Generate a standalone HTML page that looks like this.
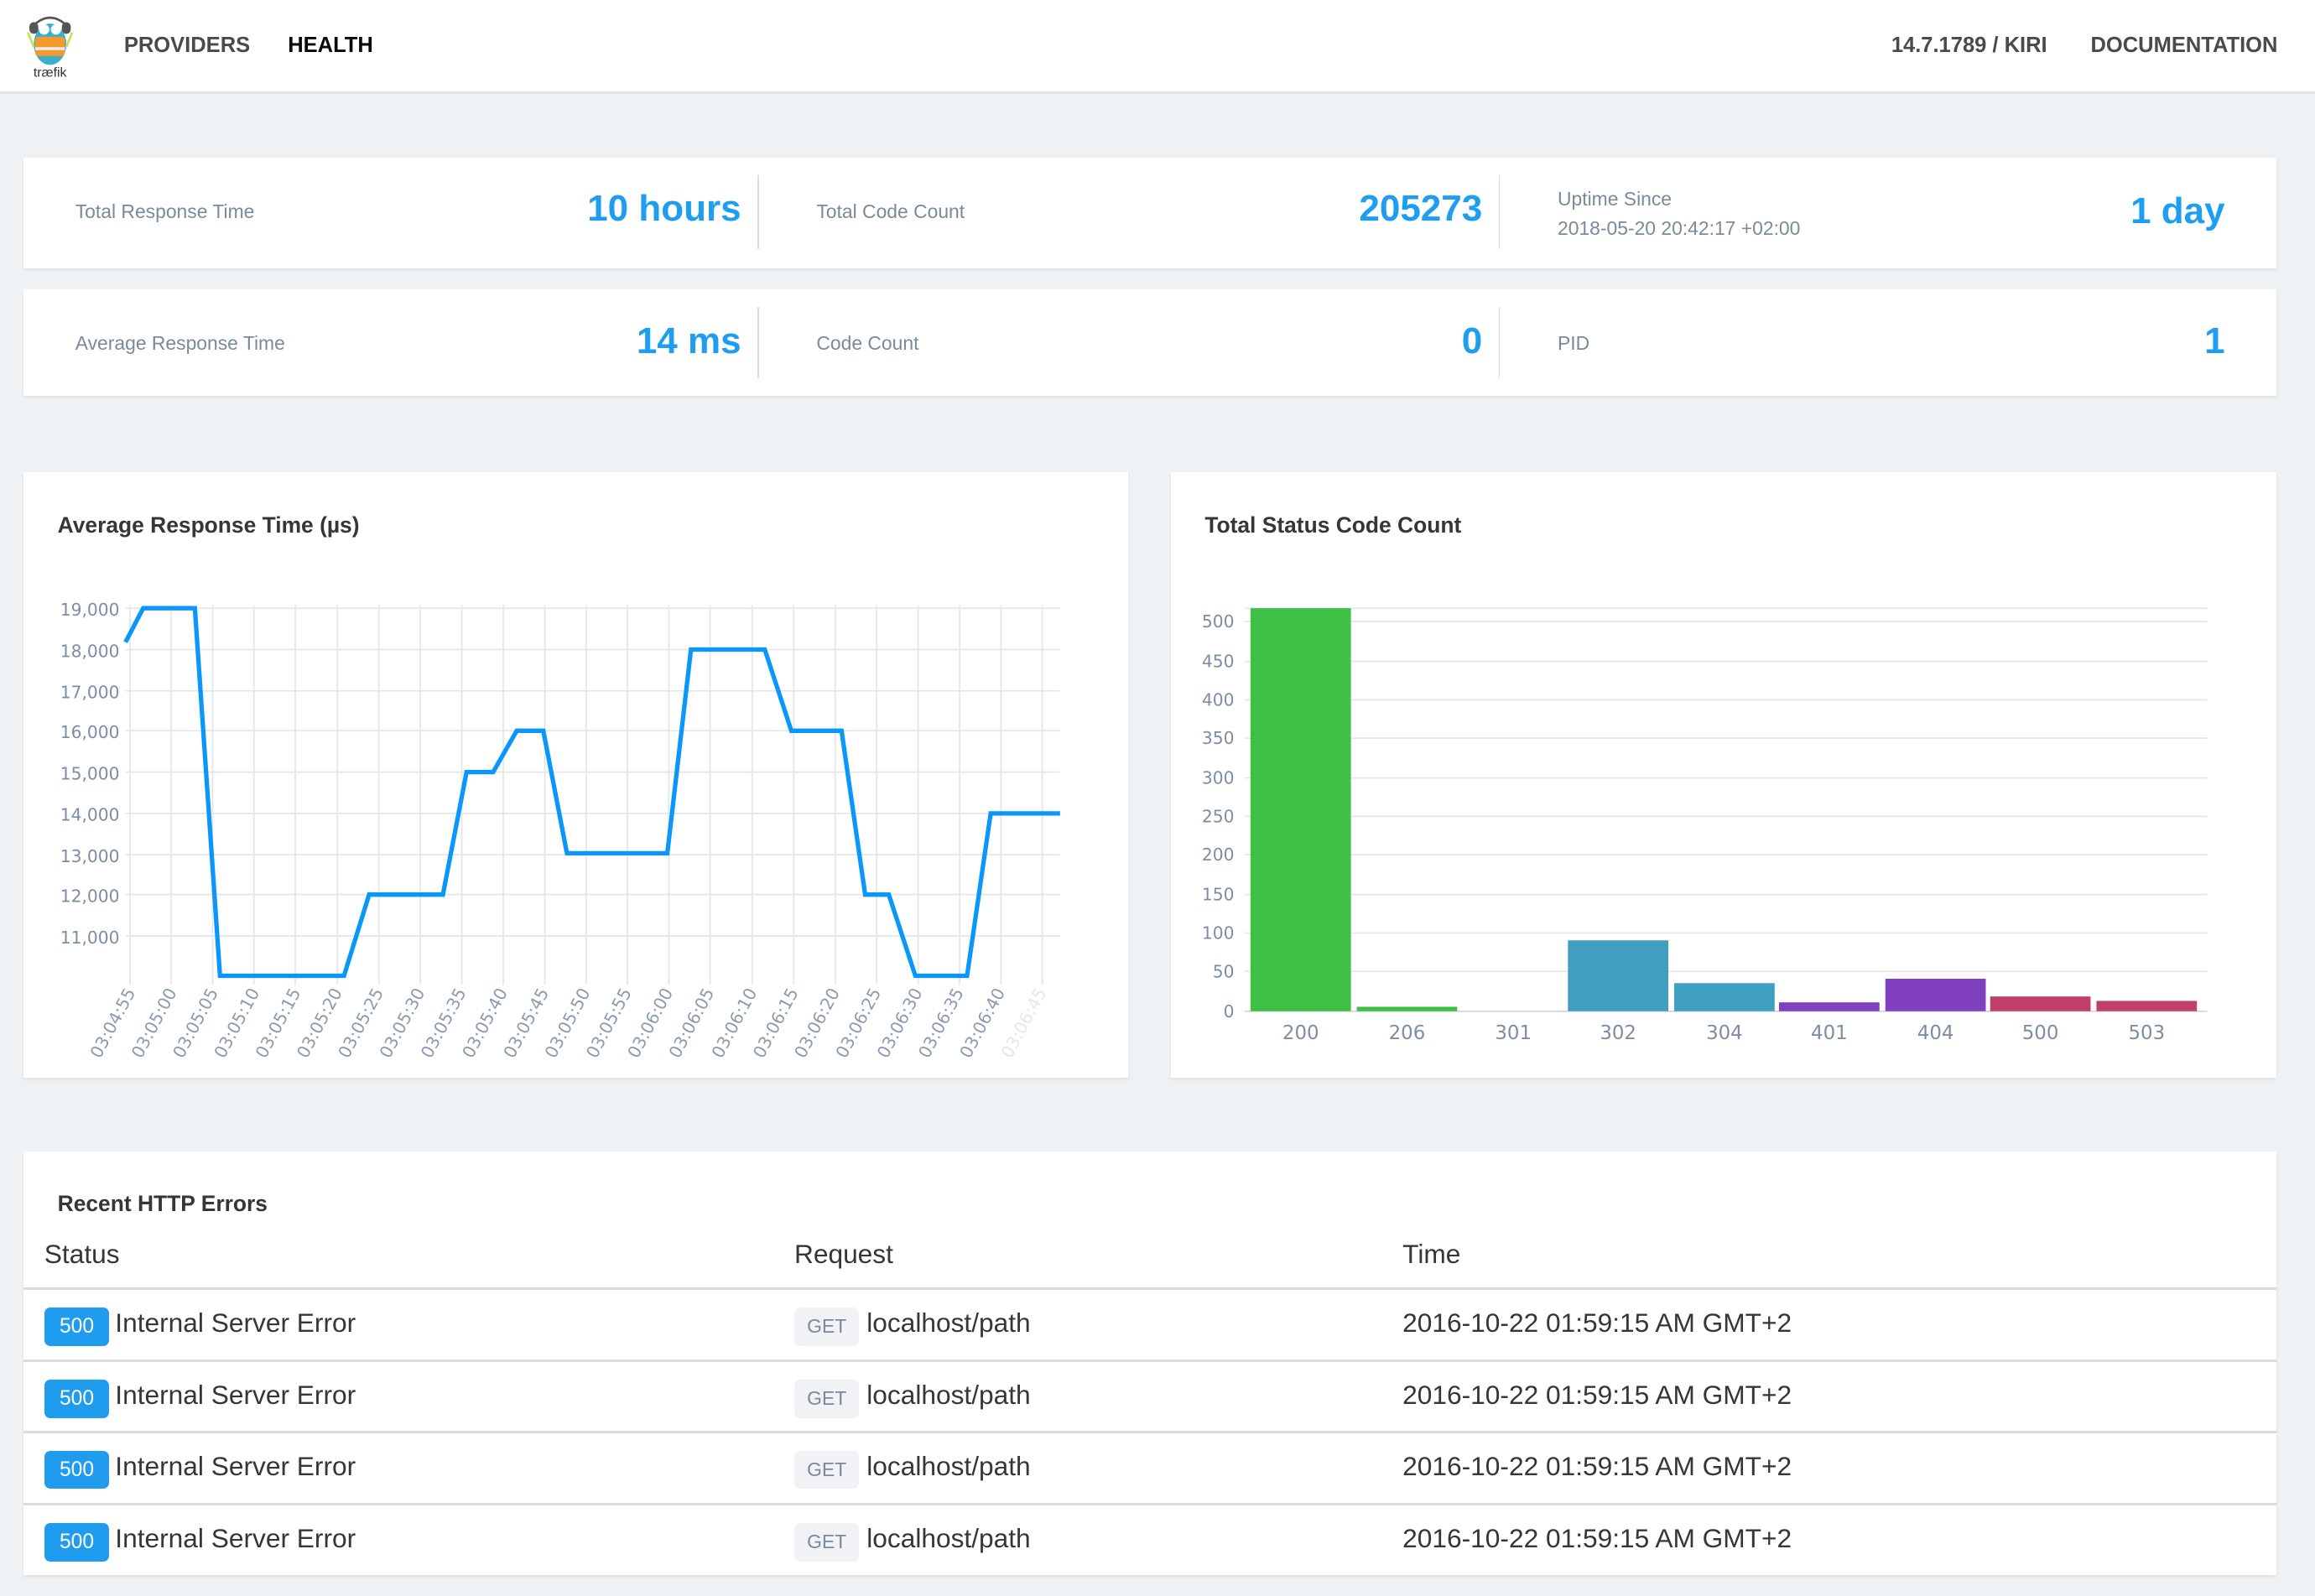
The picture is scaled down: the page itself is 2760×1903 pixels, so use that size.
<!DOCTYPE html>
<html><head><meta charset="utf-8"><style>
html,body{margin:0;padding:0}
body{width:2760px;height:1902px;overflow:hidden;background:#eff2f5;font-family:"Liberation Sans","DejaVu Sans",sans-serif}
#z{zoom:1.7602;width:1568px;height:1081px;position:relative}
.nav{position:absolute;left:0;top:0;width:1568px;height:62px;background:#fff;border-bottom:2px solid #e1e4e8}
.nav a{position:absolute;top:23px;font-weight:bold;font-size:14.5px;color:#4a4a4a}
.card{position:absolute;background:#fff;box-shadow:0 1px 2px rgba(0,0,0,.08)}
.lbl{position:absolute;font-size:13px;color:#7a8a9a}
.val{position:absolute;font-weight:bold;font-size:25px;color:#1e9ef0;text-align:right}
.sep{position:absolute;width:1px;background:#dbdbdb}
h3{position:absolute;margin:0;font-size:15px;color:#363636;font-weight:bold}
.row{position:absolute;left:0;width:1526px;border-top:2px solid #dbdbdb;height:47px}
.b5{position:absolute;left:14px;top:12px;width:44px;height:26px;background:#209cee;border-radius:4px;color:#fff;font-size:14px;text-align:center;line-height:26px}
.t{position:absolute;font-size:18px;color:#363636}
.get{position:absolute;left:522px;top:12px;width:44px;height:26px;background:#f0f2f5;border-radius:4px;color:#7a8a9a;font-size:13px;text-align:center;line-height:26px}
</style></head><body><div id="z">
<div class="nav">
<svg style="position:absolute;left:16px;top:8px" width="36" height="46" viewBox="0 0 36 46">
<path d="M6 10 Q18 -2 30 10" stroke="#555" stroke-width="1.5" fill="none"/>
<ellipse cx="18" cy="22" rx="11" ry="14" fill="#3aafce"/>
<rect x="4" y="7" width="6" height="8" rx="3" fill="#555"/><rect x="26" y="7" width="6" height="8" rx="3" fill="#555"/>
<circle cx="14" cy="12" r="3.5" fill="#fff"/><circle cx="22" cy="12" r="3.5" fill="#fff"/>
<rect x="8" y="17" width="20" height="13" rx="2" fill="#f39a2b"/>
<rect x="8" y="24" width="20" height="2" fill="#eee"/>
<line x1="3" y1="14" x2="7" y2="24" stroke="#cde04a" stroke-width="1.5"/><line x1="33" y1="14" x2="29" y2="24" stroke="#cde04a" stroke-width="1.5"/>
<text x="18" y="44" font-size="9" text-anchor="middle" fill="#333" font-family="Liberation Sans">træfik</text>
</svg>
<a style="left:84px">PROVIDERS</a><a style="left:195px;color:#0a0a0a">HEALTH</a>
<a style="left:1281px">14.7.1789 / KIRI</a><a style="left:1416px">DOCUMENTATION</a>
</div>

<div class="card" style="left:16px;top:107px;width:1526px;height:75px">
<div class="lbl" style="left:35px;top:29px">Total Response Time</div>
<div class="val" style="left:300px;width:186px;top:20px">10 hours</div>
<div class="sep" style="left:497px;top:12px;height:50px"></div>
<div class="lbl" style="left:537px;top:29px">Total Code Count</div>
<div class="val" style="left:800px;width:188px;top:20px">205273</div>
<div class="sep" style="left:999px;top:12px;height:50px"></div>
<div class="lbl" style="left:1039px;top:20px">Uptime Since</div>
<div class="lbl" style="left:1039px;top:40px">2018-05-20 20:42:17 +02:00</div>
<div class="val" style="left:1300px;width:191px;top:22px">1 day</div>
</div>
<div class="card" style="left:16px;top:196px;width:1526px;height:72px">
<div class="lbl" style="left:35px;top:29px">Average Response Time</div>
<div class="val" style="left:300px;width:186px;top:21px">14 ms</div>
<div class="sep" style="left:497px;top:12px;height:48px"></div>
<div class="lbl" style="left:537px;top:29px">Code Count</div>
<div class="val" style="left:800px;width:188px;top:21px">0</div>
<div class="sep" style="left:999px;top:12px;height:48px"></div>
<div class="lbl" style="left:1039px;top:29px">PID</div>
<div class="val" style="left:1300px;width:191px;top:21px">1</div>
</div>

<div class="card" style="left:16px;top:320px;width:748px;height:410px"><h3 style="left:23px;top:27px">Average Response Time (µs)</h3></div>
<div class="card" style="left:793px;top:320px;width:749px;height:410px"><h3 style="left:23px;top:27px">Total Status Code Count</h3></div>

<svg style="position:absolute;left:0;top:0" width="1568" height="740" font-family="DejaVu Sans,sans-serif">
<g stroke="#e3e6ea" stroke-width="1">
<line x1="85" x2="718" y1="412" y2="412"/><line x1="85" x2="718" y1="440" y2="440"/><line x1="85" x2="718" y1="468" y2="468"/><line x1="85" x2="718" y1="495" y2="495"/><line x1="85" x2="718" y1="523" y2="523"/><line x1="85" x2="718" y1="551" y2="551"/><line x1="85" x2="718" y1="579" y2="579"/><line x1="85" x2="718" y1="606" y2="606"/><line x1="85" x2="718" y1="634" y2="634"/>
<line y1="410" y2="667" x1="88" x2="88"/><line y1="410" y2="667" x1="116" x2="116"/><line y1="410" y2="667" x1="144" x2="144"/><line y1="410" y2="667" x1="172" x2="172"/><line y1="410" y2="667" x1="200" x2="200"/><line y1="410" y2="667" x1="228.5" x2="228.5"/><line y1="410" y2="667" x1="256.6" x2="256.6"/><line y1="410" y2="667" x1="284.7" x2="284.7"/><line y1="410" y2="667" x1="312.8" x2="312.8"/><line y1="410" y2="667" x1="340.9" x2="340.9"/><line y1="410" y2="667" x1="369" x2="369"/><line y1="410" y2="667" x1="397" x2="397"/><line y1="410" y2="667" x1="425" x2="425"/><line y1="410" y2="667" x1="453" x2="453"/><line y1="410" y2="667" x1="481" x2="481"/><line y1="410" y2="667" x1="509.5" x2="509.5"/><line y1="410" y2="667" x1="537.6" x2="537.6"/><line y1="410" y2="667" x1="565.7" x2="565.7"/><line y1="410" y2="667" x1="593.8" x2="593.8"/><line y1="410" y2="667" x1="621.9" x2="621.9"/><line y1="410" y2="667" x1="650" x2="650"/><line y1="410" y2="667" x1="678" x2="678"/><line y1="410" y2="667" x1="706" x2="706"/>
</g>
<g fill="#7d8da3" font-size="11.5" text-anchor="end">
<text x="81" y="417">19,000</text><text x="81" y="445">18,000</text><text x="81" y="473">17,000</text><text x="81" y="500">16,000</text><text x="81" y="528">15,000</text><text x="81" y="556">14,000</text><text x="81" y="584">13,000</text><text x="81" y="611">12,000</text><text x="81" y="639">11,000</text>
</g>
<g fill="#8c9bb0" font-size="11.5" text-anchor="end">
<text transform="translate(92,672) rotate(-62)">03:04:55</text><text transform="translate(120,672) rotate(-62)">03:05:00</text><text transform="translate(148,672) rotate(-62)">03:05:05</text><text transform="translate(176,672) rotate(-62)">03:05:10</text><text transform="translate(204,672) rotate(-62)">03:05:15</text><text transform="translate(232,672) rotate(-62)">03:05:20</text><text transform="translate(260,672) rotate(-62)">03:05:25</text><text transform="translate(288,672) rotate(-62)">03:05:30</text><text transform="translate(316,672) rotate(-62)">03:05:35</text><text transform="translate(344,672) rotate(-62)">03:05:40</text><text transform="translate(372,672) rotate(-62)">03:05:45</text><text transform="translate(400,672) rotate(-62)">03:05:50</text><text transform="translate(428,672) rotate(-62)">03:05:55</text><text transform="translate(456,672) rotate(-62)">03:06:00</text><text transform="translate(484,672) rotate(-62)">03:06:05</text><text transform="translate(513,672) rotate(-62)">03:06:10</text><text transform="translate(541,672) rotate(-62)">03:06:15</text><text transform="translate(569,672) rotate(-62)">03:06:20</text><text transform="translate(597,672) rotate(-62)">03:06:25</text><text transform="translate(625,672) rotate(-62)">03:06:30</text><text transform="translate(653,672) rotate(-62)">03:06:35</text><text transform="translate(681,672) rotate(-62)">03:06:40</text><text fill="#e3e6ea" transform="translate(709,672) rotate(-62)">03:06:45</text>
</g>
<polyline fill="none" stroke="#0a97fb" stroke-width="3" points="85,435 97,412 132,412 149,661 233,661 250,606 300,606 316,523 334,523 350,495 368,495 384,578 452,578 468,440 518,440 536,495 570,495 586,606 602,606 620,661 655,661 671,551 718,551"/>

<g stroke="#e3e6ea"><line x1="843" x2="1495" y1="412" y2="412"/><line x1="843" x2="1495" y1="421" y2="421"/><line x1="843" x2="1495" y1="448" y2="448"/><line x1="843" x2="1495" y1="474" y2="474"/><line x1="843" x2="1495" y1="500" y2="500"/><line x1="843" x2="1495" y1="527" y2="527"/><line x1="843" x2="1495" y1="553" y2="553"/><line x1="843" x2="1495" y1="579" y2="579"/><line x1="843" x2="1495" y1="606" y2="606"/><line x1="843" x2="1495" y1="632" y2="632"/><line x1="843" x2="1495" y1="658" y2="658"/><line x1="843" x2="1495" y1="685" y2="685" stroke="#cfd4da"/></g>
<g fill="#7d8da3" font-size="11.5" text-anchor="end">
<text x="836" y="425">500</text><text x="836" y="452">450</text><text x="836" y="478">400</text><text x="836" y="504">350</text><text x="836" y="531">300</text><text x="836" y="557">250</text><text x="836" y="583">200</text><text x="836" y="610">150</text><text x="836" y="636">100</text><text x="836" y="662">50</text><text x="836" y="689">0</text>
</g>
<rect x="847" y="412" width="68" height="273" fill="#3fbf45"/>
<rect x="919" y="682" width="68" height="3" fill="#3fbf45"/>
<rect x="1062" y="637" width="68" height="48" fill="#3f9fc0"/>
<rect x="1134" y="666" width="68" height="19" fill="#3f9fc0"/>
<rect x="1205" y="679" width="68" height="6" fill="#7f3fbf"/>
<rect x="1277" y="663" width="68" height="22" fill="#7f3fbf"/>
<rect x="1348" y="675" width="68" height="10" fill="#bf3f6a"/>
<rect x="1420" y="678" width="68" height="7" fill="#bf3f6a"/>
<g fill="#7d8da3" font-size="13" text-anchor="middle">
<text x="881" y="704">200</text><text x="953" y="704">206</text><text x="1025" y="704">301</text><text x="1096" y="704">302</text><text x="1168" y="704">304</text><text x="1239" y="704">401</text><text x="1311" y="704">404</text><text x="1382" y="704">500</text><text x="1454" y="704">503</text>
</g>
</svg>

<div class="card" style="left:16px;top:780px;width:1526px;height:287px">
<h3 style="left:23px;top:27px">Recent HTTP Errors</h3>
<div class="t" style="left:14px;top:59px">Status</div><div class="t" style="left:522px;top:59px">Request</div><div class="t" style="left:934px;top:59px">Time</div>
<div class="row" style="top:92px"><div class="b5">500</div><div class="t" style="left:62px;top:12px">Internal Server Error</div><div class="get">GET</div><div class="t" style="left:571px;top:12px">localhost/path</div><div class="t" style="left:934px;top:12px">2016-10-22 01:59:15 AM GMT+2</div></div>
<div class="row" style="top:141px"><div class="b5">500</div><div class="t" style="left:62px;top:12px">Internal Server Error</div><div class="get">GET</div><div class="t" style="left:571px;top:12px">localhost/path</div><div class="t" style="left:934px;top:12px">2016-10-22 01:59:15 AM GMT+2</div></div>
<div class="row" style="top:189px"><div class="b5">500</div><div class="t" style="left:62px;top:12px">Internal Server Error</div><div class="get">GET</div><div class="t" style="left:571px;top:12px">localhost/path</div><div class="t" style="left:934px;top:12px">2016-10-22 01:59:15 AM GMT+2</div></div>
<div class="row" style="top:238px"><div class="b5">500</div><div class="t" style="left:62px;top:12px">Internal Server Error</div><div class="get">GET</div><div class="t" style="left:571px;top:12px">localhost/path</div><div class="t" style="left:934px;top:12px">2016-10-22 01:59:15 AM GMT+2</div></div>
</div>
</div></body></html>
